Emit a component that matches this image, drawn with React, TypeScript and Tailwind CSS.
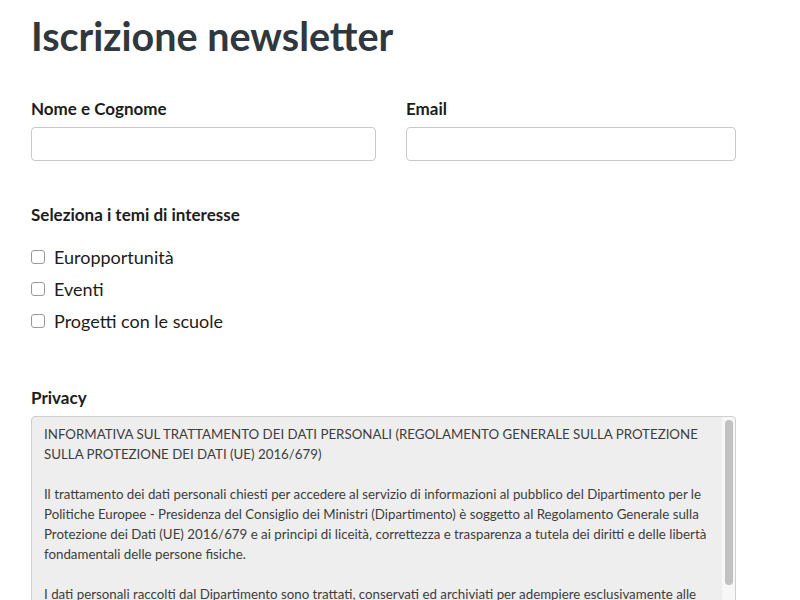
const font = "font-[Lato,'Noto_Sans',sans-serif]";

const temi = ["Europportunità", "Eventi", "Progetti con le scuole"];

const privacy = [
  "INFORMATIVA SUL TRATTAMENTO DEI DATI PERSONALI (REGOLAMENTO GENERALE SULLA PROTEZIONE",
  "SULLA PROTEZIONE DEI DATI (UE) 2016/679)",
  "",
  "Il trattamento dei dati personali chiesti per accedere al servizio di informazioni al pubblico del Dipartimento per le",
  "Politiche Europee - Presidenza del Consiglio dei Ministri (Dipartimento) è soggetto al Regolamento Generale sulla",
  "Protezione dei Dati (UE) 2016/679 e ai principi di liceità, correttezza e trasparenza a tutela dei diritti e delle libertà",
  "fondamentali delle persone fisiche.",
  "",
  "I dati personali raccolti dal Dipartimento sono trattati, conservati ed archiviati per adempiere esclusivamente alle",
  "finalità istituzionali del servizio richiesto.",
];

export default function App() {
  return (
    <div className={`${font} bg-white w-[800px] h-[600px] overflow-hidden text-[#333]`}>
      <div className="pl-[31px] w-[736px]">
        <h1 className="text-[39.5px] leading-[48px] font-bold text-[#30373d] pt-[12px]">Iscrizione newsletter</h1>

        <div className="flex gap-[30px] mt-[39px]">
          <div className="w-[345px]">
            <label className="block text-[17px] leading-[20px] font-bold text-[#1c1c1c]">Nome e Cognome</label>
            <input className="mt-[8px] block w-full h-[34px] rounded-[4px] border border-[#c8c8c8] bg-white" />
          </div>
          <div className="w-[330px]">
            <label className="block text-[17px] leading-[20px] font-bold text-[#1c1c1c]">Email</label>
            <input className="mt-[8px] block w-full h-[34px] rounded-[4px] border border-[#c8c8c8] bg-white" />
          </div>
        </div>

        <div className="mt-[44px] text-[17px] leading-[20px] font-bold text-[#1c1c1c]">Seleziona i temi di interesse</div>
        <div className="mt-[22px] flex flex-col gap-[12px]">
          {temi.map((t) => (
            <label key={t} className="flex items-center h-[20px]">
              <span className="w-[14px] h-[14px] rounded-[3px] border border-[#9a9a9a] bg-white" />
              <span className="ml-[9px] text-[18px] leading-[20px] text-[#1c1c1c]">{t}</span>
            </label>
          ))}
        </div>

        <div className="mt-[57px] text-[17px] leading-[20px] font-bold text-[#1c1c1c]">Privacy</div>
        <div className="mt-[8px] flex h-[220px] rounded-[4px] border border-[#cfcfcf] bg-[#eeeeee]">
          <div className="flex-1 min-w-0 overflow-hidden pl-[12px] pt-[7px] text-[13.3px] leading-[20px] text-[#3d3d3d]">
            {privacy.map((l, i) => (
              <div key={i} className="h-[20px] whitespace-nowrap">{l}</div>
            ))}
          </div>
          <div className="w-[13px] shrink-0 bg-[#f7f7f7] rounded-r-[4px] flex justify-center pt-[3px]">
            <div className="w-[8px] h-[165px] rounded-full bg-[#c1c1c1]" />
          </div>
        </div>
      </div>
    </div>
  );
}
